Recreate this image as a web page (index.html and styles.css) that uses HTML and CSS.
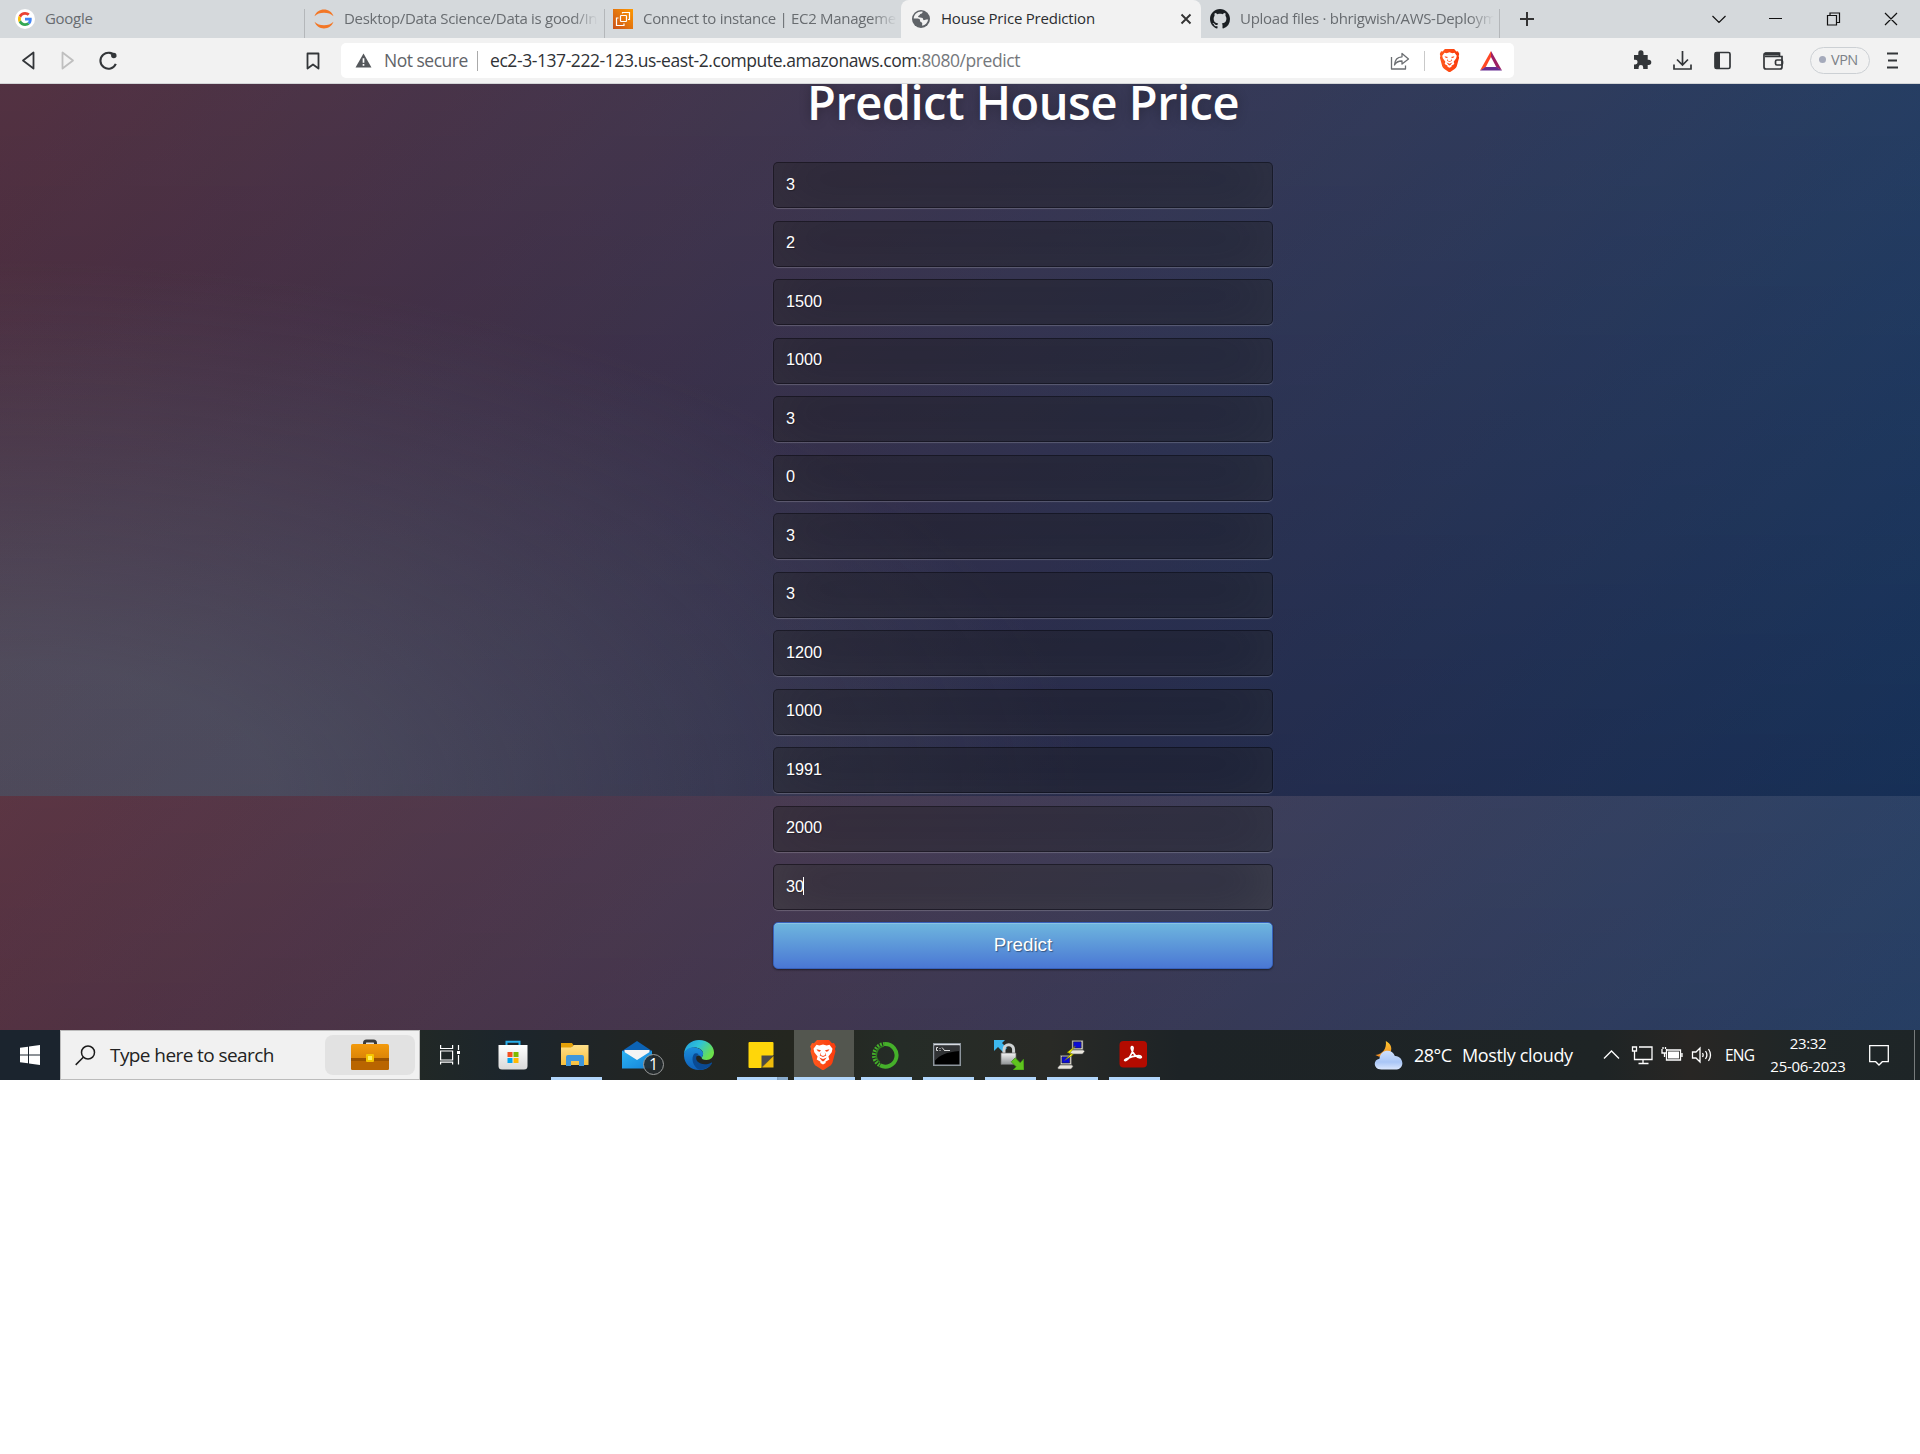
FILE: index.html
```html
<!DOCTYPE html>
<html lang="en">
<head>
<meta charset="utf-8">
<title>House Price Prediction</title>
<link rel="stylesheet" href="styles.css">
</head>
<body>
<svg width="0" height="0" class="defs" aria-hidden="true">
  <defs>
    <linearGradient id="gBrave" x1="0" x2="1"><stop offset="0" stop-color="#ff5a1f"/><stop offset="1" stop-color="#fb3b0c"/></linearGradient>
    <linearGradient id="gAws" x1="0" y1="1" x2="1" y2="0"><stop offset="0" stop-color="#c8511b"/><stop offset="1" stop-color="#ff9900"/></linearGradient>
    <linearGradient id="gCase" x1="0" y1="0" x2="0" y2="1"><stop offset="0" stop-color="#f39a0c"/><stop offset="1" stop-color="#c97404"/></linearGradient>
    <linearGradient id="gStore" x1="0" y1="0" x2="0" y2="1"><stop offset="0" stop-color="#fff"/><stop offset="1" stop-color="#d9d9d9"/></linearGradient>
    <linearGradient id="gFold" x1="0" y1="0" x2="0" y2="1"><stop offset="0" stop-color="#ffe08a"/><stop offset="1" stop-color="#f8c03c"/></linearGradient>
    <linearGradient id="gMail" x1="0" y1="0" x2="1" y2="1"><stop offset="0" stop-color="#2bb3f3"/><stop offset="1" stop-color="#1583d8"/></linearGradient>
    <linearGradient id="gEdge" x1="0" y1="0" x2="1" y2=".5"><stop offset="0" stop-color="#1f9ae0"/><stop offset=".5" stop-color="#2fc3d8"/><stop offset="1" stop-color="#6be04b"/></linearGradient>
    <linearGradient id="gEdge2" x1="0" y1="0" x2="0" y2="1"><stop offset="0" stop-color="#1b8ddb"/><stop offset="1" stop-color="#0f5fb8"/></linearGradient>
    <linearGradient id="gCloud" x1="0" y1="0" x2="0" y2="1"><stop offset="0" stop-color="#cfe0fb"/><stop offset=".6" stop-color="#a9c6f6"/><stop offset="1" stop-color="#dbe7fd"/></linearGradient>
    <linearGradient id="gMoon" x1="0" y1="0" x2="0" y2="1"><stop offset="0" stop-color="#ffc62e"/><stop offset="1" stop-color="#f08a24"/></linearGradient>
    <linearGradient id="gLock" x1="0" y1="0" x2="0" y2="1"><stop offset="0" stop-color="#f4f4f4"/><stop offset="1" stop-color="#8f9394"/></linearGradient>
    <symbol id="brave" viewBox="0 0 26 30">
      <path fill="url(#gBrave)" d="M7 0h12l3 3.200 2-.3 1.800 3.600-.9 2.600.6 2.200-3 11.200c-.5 1.600-1.500 2.700-2.800 3.600L14.400 29.600a2.400 2.400 0 0 1-2.800 0l-5.300-3.500C5 25.200 4 24.100 3.500 22.500L.5 11.300l.6-2.200L.2 6.500 2 2.900l2 .3z"/>
      <path fill="#fff" d="M6.500 4.800l2.800.6 3.700-1 3.700 1 2.800-.6 3 4-.8 3.400-3.300 4.300.9 3-3.800 2.300.2 1.300L13 24.500l-2.700-1.400.2-1.300-3.800-2.300.9-3-3.300-4.300-.8-3.400z"/>
      <path fill="#fb471a" d="M6.500 9.300l4.500 1-1.200 1.400-1.900-.4zM19.500 9.300l-4.500 1 1.200 1.400 1.900-.4zM11.200 12l-1.500 3.400 3.300 1.700 3.300-1.700-1.500-3.400.5 3-2.300 1-2.300-1zM9.200 17.500l3.800 1.600 3.800-1.600-2.600 3.300-1.200.6-1.200-.6z"/>
    </symbol>
    <symbol id="github" viewBox="0 0 16 16">
      <path d="M8 0C3.580 0 0 3.580 0 8c0 3.540 2.290 6.530 5.470 7.590.4.070.55-.17.55-.38 0-.19-.01-.82-.01-1.490-2.010.37-2.530-.49-2.690-.94-.09-.23-.48-.94-.82-1.130-.28-.15-.68-.52-.01-.53.63-.01 1.080.58 1.230.82.72 1.210 1.870.87 2.330.66.070-.52.28-.87.51-1.070-1.780-.2-3.640-.89-3.640-3.950 0-.87.31-1.590.82-2.150-.08-.2-.36-1.020.08-2.120 0 0 .67-.21 2.200.82.640-.18 1.320-.27 2-.27s1.360.09 2 .27c1.530-1.040 2.200-.82 2.200-.82.44 1.100.16 1.920.08 2.120.51.560.82 1.270.82 2.150 0 3.070-1.870 3.750-3.650 3.950.29.250.54.730.54 1.480 0 1.070-.01 1.930-.01 2.200 0 .21.150.46.550.38A8.010 8.010 0 0 0 16 8c0-4.420-3.580-8-8-8z"/>
    </symbol>
    <symbol id="pc" viewBox="0 0 16 15">
      <path fill="#d7d3c8" stroke="#555" stroke-width=".6" d="M3 .4h11v9.400H3z"/><path fill="#0b0bd8" stroke="#222" stroke-width=".6" d="M4.400 1.800h7.800v6.200H4.400z"/>
      <path fill="#e9e6dd" stroke="#555" stroke-width=".6" d="M2.500 10h12l1 1.500-2 2.500H.6l-.3-1.500z"/>
    </symbol>
  </defs>
</svg>

<div class="desktop">
  <header class="tabs">
    <div class="tab tab-google">
      <svg class="fav" viewBox="0 0 20 20"><circle cx="10" cy="10" r="10" fill="#fff"/><g transform="translate(3 3) scale(.292)"><path fill="#EA4335" d="M24 9.500c3.540 0 6.710 1.220 9.210 3.600l6.850-6.850C35.900 2.380 30.470 0 24 0 14.620 0 6.510 5.380 2.560 13.220l7.980 6.190C12.430 13.720 17.740 9.500 24 9.500z"/><path fill="#4285F4" d="M46.980 24.550c0-1.570-.15-3.090-.38-4.550H24v9.020h12.940c-.58 2.960-2.260 5.480-4.780 7.180l7.730 6c4.510-4.180 7.090-10.360 7.090-17.650z"/><path fill="#FBBC05" d="M10.530 28.590c-.48-1.450-.76-2.990-.76-4.590s.27-3.140.76-4.590l-7.980-6.190C.92 16.460 0 20.120 0 24c0 3.880.92 7.540 2.560 10.780l7.970-6.190z"/><path fill="#34A853" d="M24 48c6.480 0 11.930-2.130 15.890-5.810l-7.730-6c-2.150 1.450-4.920 2.300-8.160 2.300-6.260 0-11.570-4.220-13.470-9.910l-7.980 6.190C6.510 42.620 14.620 48 24 48z"/></g></svg>
      <span class="tab-title">Google</span>
    </div>
    <div class="tab tab-sep">
      <svg class="fav" viewBox="0 0 20 20"><path fill="#f37726" d="M.5 7.200C2.200 2.700 5.700.5 10 .5s7.800 2.200 9.500 6.700C17 4.800 14 3.700 10 3.700S3 4.800.5 7.200zM.5 12.800c1.700 4.500 5.200 6.700 9.500 6.700s7.800-2.200 9.500-6.700C17 15.200 14 16.300 10 16.300S3 15.200.5 12.800z"/></svg>
      <span class="tab-title fade">Desktop/Data Science/Data is good/In</span>
    </div>
    <div class="tab tab-sep tab-aws">
      <svg class="fav" viewBox="0 0 20 20"><path fill="url(#gAws)" d="M0 0h20v20H0z"/><g fill="none" stroke="#fff" stroke-width="1.200"><rect x="7.500" y="6.500" width="6" height="6" rx=".8"/><path d="M9.500 4.500V3.500h7v7h-1.500M5.500 9H3.500v7.500H11V14.500"/></g></svg>
      <span class="tab-title fade">Connect to instance | EC2 Managemen</span>
    </div>
    <div class="tab tab-active">
      <svg class="fav" viewBox="0 0 20 20"><circle cx="10" cy="10" r="9" fill="#5f6368"/><path fill="#f2f2f2" d="M11.500 2.500c.5 1.500-1 2.300-2.300 2.600-.5 1.700-2 1.600-2.200 2.600.5 1.200 3.500.6 4.500 1.400.8.800.3 1.700 1.300 2.100 1.300 0 2.200-.9 4.400-.7-.6 3.300-3 5.700-5.900 6.200-.5-1.200.4-2.200-.4-3.100-1-.6-2-.9-1.900-2.200.1-1.100-1-1.500-2.200-1.800-1.400-.2-2.800-.2-4.100-.2C3 5.200 6.500 2 11.500 2.500z"/></svg>
      <span class="tab-title t-act">House Price Prediction</span>
      <svg class="close" viewBox="0 0 12 12"><path d="M1.500 1.500l9 9M10.500 1.500l-9 9" stroke="#333" stroke-width="1.900"/></svg>
    </div>
    <div class="tab tab-git">
      <svg class="fav" viewBox="0 0 20 20"><use href="#github" fill="#1b1f23"/></svg>
      <span class="tab-title fade">Upload files · bhrigwish/AWS-Deploym</span>
    </div>
    <svg class="plus" viewBox="0 0 16 16"><path d="M8 1v14M1 8h14" stroke="#333" stroke-width="2"/></svg>
    <svg class="wincontrols" viewBox="0 0 190 20"><g fill="none" stroke="#111" stroke-width="1.200"><path d="M3.500 7l6.500 6.500L16.500 7M60 9.500h13M118.500 6.500h9v9.500h-9zM121 6.500V4h9.500v9.500H127.500M176 4l12 12M188 4l-12 12"/></g></svg>
  </header>

  <nav class="toolbar">
    <svg class="nav-icons" viewBox="0 0 104 24"><g fill="none" stroke-width="1.800" stroke-linejoin="round"><path stroke="#333639" d="M13.500 3.500v16L3 11.500z"/><path stroke="#bfbfbf" d="M42.500 3.500v16L53 11.500z"/><path stroke="#333639" stroke-width="2.100" d="M95.500 8a8 8 0 1 0 .3 6.800"/></g><circle cx="93.800" cy="6.500" r="2.700" fill="#333639"/></svg>
    <svg class="bookmark" viewBox="0 0 14 18"><path fill="none" stroke="#333639" stroke-width="1.800" stroke-linejoin="round" d="M1.500 1.500h11v15L7 12.500 1.500 16.500z"/></svg>
    <div class="omnibox">
      <svg class="warn" viewBox="0 0 18 16"><path fill="#55585c" d="M9 .5L17.500 15.500H.5z"/><path stroke="#fff" stroke-width="1.800" d="M9 5.500v5M9 11.700v1.800"/></svg>
      <span class="insecure">Not secure</span>
      <i class="bar"></i>
      <span class="url">ec2-3-137-222-123.us-east-2.compute.amazonaws.com<span>:8080/predict</span></span>
      <svg class="share" viewBox="0 0 20 18"><path fill="none" stroke="#6b6e72" stroke-width="1.300" stroke-linejoin="round" d="M1.500 5v12H15.500v-3.500M12 1.500l6.500 5.500-6.500 5V9c-3.500 0-6 1-7.500 4 .3-5 3-8 7.500-8.200z"/></svg>
      <i class="bar thin"></i>
      <svg class="bravebtn" viewBox="0 0 26 30"><use href="#brave"/></svg>
      <svg class="bat" viewBox="0 0 22 20"><path fill="#ff4724" d="M11 0L0 19.500l5.500-3L11 6z"/><path fill="#9e1f63" d="M11 0l11 19.500-5.500-3L11 6z"/><path fill="#662d91" d="M0 19.500h22l-5.500-3.500h-11z"/></svg>
    </div>
    <svg class="tools" viewBox="0 0 152 24"><g fill="#333639"><path d="M3 7.500h4.300V5.400a2.600 2.600 0 0 1 5.200 0v2.100h4.200v4.700h1a2.600 2.600 0 0 1 0 5.200h-1v4h-4.500v-1.500a2.300 2.300 0 0 0-4.600 0v1.500H3v-4.500h1.300a2.300 2.300 0 0 0 0-4.600H3z" transform="translate(-1 -1.500)"/></g><g fill="none" stroke="#333639" stroke-width="1.700"><path d="M50.500 2v13.500M45 10.500l5.500 5.500 5.500-5.500M42 15.500v4.500h17V15.500"/><rect x="83" y="3.500" width="15" height="16" rx="1.500"/><path d="M134 4h13.500v4M134 4c-1 0-2 .8-2 2V18a2 2 0 0 0 2 2h14a2 2 0 0 0 2-2V7.500H133"/><rect x="143.500" y="11" width="7" height="5" rx="1.500"/></g><path fill="#333639" d="M83 3.500h5v16h-5zM133 3.500h14v3h-14z"/></svg>
    <span class="vpn"><i></i>VPN</span>
    <svg class="burger" viewBox="0 0 14 18"><path d="M1 1.500h11M2 8.500h9M1 15.500h11" stroke="#333639" stroke-width="1.800"/></svg>
  </nav>

  <main class="page">
    <div class="login">
      <h1>Predict House Price</h1>
      <form>
        <input type="text" value="3"><input type="text" value="2"><input type="text" value="1500"><input type="text" value="1000"><input type="text" value="3"><input type="text" value="0"><input type="text" value="3"><input type="text" value="3"><input type="text" value="1200"><input type="text" value="1000"><input type="text" value="1991"><input type="text" value="2000">
        <div class="field focused">30<i class="caret"></i></div>
        <button type="button">Predict</button>
      </form>
    </div>
  </main>

  <footer class="taskbar">
    <div class="start"><svg width="20" height="20" viewBox="0 0 20 20"><path fill="#fff" d="M0 2.800l8-1.100v7.800H0zM9 1.500L20 0v9.500H9zM0 10.500h8v7.800L0 17.200zM9 10.500h11V20L9 18.500z"/></svg></div>
    <div class="search">
      <svg width="21" height="21" viewBox="0 0 21 21"><circle cx="13" cy="7.500" r="6.500" fill="none" stroke="#1b1b1b" stroke-width="1.500"/><path d="M8.300 12.300L.7 19.900" stroke="#1b1b1b" stroke-width="1.500"/></svg>
      <span class="search-text">Type here to search</span>
      <div class="case"><svg width="38" height="32" viewBox="0 0 38 32"><path fill="none" stroke="#3b3b3b" stroke-width="3" d="M13.500 6V4q0-2 2-2h7q2 0 2 2v2"/><rect y="5" width="38" height="26" rx="1.800" fill="url(#gCase)"/><path fill="#9a5200" d="M0 19h38v3.500H0z"/><path fill="#b96500" d="M0 22.500h38v7a1.800 1.800 0 0 1-1.800 1.500H1.800A1.800 1.800 0 0 1 0 29.500z"/><rect x="15" y="15" width="8" height="8" rx="1" fill="#f5c400"/><rect x="17" y="17" width="4" height="4" fill="#ffef5a"/></svg></div>
    </div>
    <div class="taskview"><svg width="20" height="20" viewBox="0 0 20 20"><path fill="none" stroke="#fff" stroke-width="1.200" d="M.6 0v3.500h12V0M.6 6h12v9H.6zM.6 19.500v-2.300h12v2.300M18.500 0v5M18.500 10v9.500"/><path fill="#fff" d="M17 6h3v3h-3z"/></svg></div>
    <div class="apps">
      <div class="app"><svg viewBox="0 0 30 30"><path fill="none" stroke="#28aeea" stroke-width="2" d="M8.500 6V1.800h13V6"/><path fill="url(#gStore)" d="M.5 5h29v21q0 3.500-3.500 3.500H4Q.5 29.500.5 26z"/><path fill="#f25022" d="M9.500 12h5v5h-5z"/><path fill="#7fba00" d="M15.500 12h5v5h-5z"/><path fill="#00a4ef" d="M9.500 18h5v5h-5z"/><path fill="#ffb900" d="M15.500 18h5v5h-5z"/></svg></div>
      <div class="app run"><svg viewBox="0 0 30 30"><path fill="#e3a008" d="M1 3h11l2 3h-2v4H1z"/><path fill="url(#gFold)" d="M1 7.500h10L14 5h14.500v20H1z"/><path fill="#3f97db" d="M6 26V17q0-2 2-2h14q2 0 2 2v9h-5v-5h-8v5z"/></svg></div>
      <div class="app"><svg viewBox="0 0 30 30"><path fill="#0c63b5" d="M0 11L15 1l15 10v6H0z"/><path fill="#f4f4f4" d="M2.500 10h25v6L15 22 2.500 15z"/><path fill="url(#gMail)" d="M0 10.500l15 9.500 15-9.500v18H0z"/></svg><span class="badge">1</span></div>
      <div class="app"><svg viewBox="0 0 30 30"><path fill="url(#gEdge)" d="M0 14C.5 5.500 7 0 15 0c9 0 15 6 15 12.500 0 4.500-3.500 7.500-7.500 7.500-3.500 0-5-1.200-4.800-2.300.1-.9 1.400-1.400 1.400-4.200C19 10 15 7.500 10.500 7.500 6 7.500 2 10 0 14z"/><path fill="url(#gEdge2)" d="M0 14c1.500-5 6-7 10.500-6.600 4 .3 8.600 2.600 8.600 6.100 0 2.500-1.300 3.300-1.400 4.200-4-5.500-10 .8-6.500 6 3.500 5 10.800 4 15.800 1.200C24.500 28 20.500 30 15 30 6 30-.5 23 0 14z"/><path fill="#0a4a93" d="M10 14c-3 4-1.500 12 5 15.800C20.500 30 25 27.500 28 23.500c.4-.8-.3-1.300-1-.8-5 2.700-11 1.500-13.500-1.200-2.200-2.400-1.500-6.500 1.300-7.300C13 13 11 13 10 14z"/></svg></div>
      <div class="app run multi"><svg viewBox="0 0 30 30"><path fill="#ffd60a" d="M3.500 2h23q1 0 1 1v12L15 28H3.500q-1 0-1-1V3q0-1 1-1z"/><path fill="#4a4a48" d="M15.500 15.500h12L15.500 27.500z"/><path fill="#eebb0c" d="M27.500 16v11.500H16z"/></svg></div>
      <div class="app run current"><svg viewBox="0 0 30 30"><use href="#brave" x="2" width="26" height="30"/></svg></div>
      <div class="app run"><svg viewBox="0 0 30 30"><path fill="none" stroke="#45b02a" stroke-width="4" d="M15 4a11.300 11.300 0 1 1-5 21.300"/><path fill="none" stroke="#45b02a" stroke-width="4" stroke-dasharray="1.800 1.200" d="M9.500 25A11.300 11.300 0 0 1 15 4"/><path fill="none" stroke="#2e7d1f" stroke-width="1.500" d="M10 22.500A9.300 9.300 0 0 1 14 6"/></svg></div>
      <div class="app run"><svg viewBox="0 0 30 30"><path fill="#8d959d" d="M1 3h28v23H1z"/><path fill="#d7dbe0" d="M2 4h26v1.500H2z"/><path fill="#000" d="M2.500 5.500h25v19h-25z"/><path fill="#46494c" d="M2.500 5.500h25V11C14 12 8 15 2.500 21z" opacity=".7"/><path stroke="#ddd" fill="none" d="M6 7.500H4.500v3H6M8 8v1M8 10v1M10 7.500l3 3.500M13 10.500h5"/></svg></div>
      <div class="app run"><svg viewBox="0 0 30 30"><path fill="#3db7ee" d="M0 0h11L8 3l5 5-4 4-5-5-4 4z"/><path fill="none" stroke="#cfd3d4" stroke-width="3" d="M10 14V9.500a4.800 4.800 0 0 1 9.600 0V14"/><path fill="url(#gLock)" stroke="#666" stroke-width=".7" d="M7 13h15v11.500H7z"/><path fill="#5fc41e" stroke="#3d8c12" stroke-width=".7" d="M30 30H19l3.200-3.200-5-5 4-4 5 5L29.700 19z"/></svg></div>
      <div class="app run"><svg viewBox="0 0 30 30"><use href="#pc" x="13" y="0" width="16" height="15"/><use href="#pc" x="1" y="15" width="17" height="15"/><path fill="#ff0" stroke="#6d6d00" stroke-width=".5" d="M19.500 6L11 12.500l4.500 1L8.500 20.500l9-6-4-1z"/></svg></div>
      <div class="app run"><svg viewBox="0 0 30 30"><rect x="1.500" y="1" width="27.500" height="26.500" rx="4" fill="#b30b00"/><path fill="none" stroke="#fff" stroke-width="1.700" d="M7.300 20.600c2.800-.2 7.700-7.600 7.800-12.300.1-2.600-2.300-2.200-1.800.4.800 4.300 5.500 9 8.800 9.100 2 0 1.600-2.200-1.400-2.100-4.600.2-9.700 1.800-12.600 3.300-1.500.8-2 1.600-.8 1.600z"/></svg></div>
    </div>
    <div class="tray">
      <svg class="weather" viewBox="0 0 31 32"><path fill="url(#gMoon)" d="M12 0c6 3 8 9 4 14-3 4-10 5-15.500 1.500C9 14.500 13 8 12 0z"/><path fill="url(#gCloud)" d="M7 31.500c-9 0-9.500-11-2-12C6 9 19 8 22 16.500c9-.5 12 13.500 2 15z"/></svg>
      <span class="temp">28°C</span><span class="sky">Mostly cloudy</span>
      <svg class="trayicons" viewBox="0 0 110 22"><g fill="none" stroke="#fff" stroke-width="1.300"><path d="M1 14.500l7.500-7.500 7.500 7.500M36 3h13v12.500H31.500V9.500M40 15.500V19M35.500 19.500h10M29.500 3h4v4h-4zM31.500 7v2.500M63.500 6h14v10h-14zM79 9v4M59 5v4h4.500V5M60 3v2M62.500 3v2M61.500 9v4M89.500 8h3.500l4-4v14l-4-4h-3.500zM99.500 9q1.300 2 0 4M102.500 7q2.800 4 0 8M105.500 5q4 6 0 12"/></g><path fill="#fff" d="M65 7.500h11v7H65z"/></svg>
      <span class="lang">ENG</span>
      <div class="clock"><span>23:32</span><span class="date">25-06-2023</span></div>
      <svg class="notif" viewBox="0 0 20 21"><path fill="none" stroke="#fff" stroke-width="1.300" d="M.7.700h18.600v16h-6L10 20l-3.300-3.300h-6z"/></svg>
      <i class="peek"></i>
    </div>
  </footer>
</div>
</body>
</html>
```
FILE: styles.css
```css
* { box-sizing: border-box; }
body { margin: 0; background: #fff; font-family: "Open Sans", "Noto Sans", sans-serif; }
svg { display: block; flex: none; }
.defs { position: absolute; }
.desktop { width: 1920px; height: 1080px; display: flex; flex-direction: column; overflow: hidden; }

/* Tab strip */
.tabs { height: 38px; background: #d5d9dc; display: flex; align-items: center; }
.tab { height: 38px; width: 300px; display: flex; align-items: center; padding-left: 10px; flex: none; position: relative; }
.tab-google { width: 304px; padding-left: 15px; }
.tab-sep::before { content: ""; position: absolute; left: 0; top: 9px; height: 29px; width: 1px; background: #b4b7ba; }
.tab-aws { width: 297px; padding-left: 9px; }
.tab-active { background: #f2f2f2; border-radius: 8px 8px 0 0; padding-right: 9px; }
.tab-git { padding-left: 9px; }
.tab-git::after { content: ""; position: absolute; right: 1px; top: 9px; height: 29px; width: 1px; background: #b4b7ba; }
.fav { width: 20px; height: 20px; }
.tab-title { margin-left: 10px; padding-bottom: 2px; font-size: 15px; line-height: 20px; letter-spacing: -.3px; color: #686c70; white-space: nowrap; }
.fade { width: 254px; overflow: hidden; -webkit-mask-image: linear-gradient(90deg, #000 90%, transparent 100%); mask-image: linear-gradient(90deg, #000 90%, transparent 100%); }
.t-act { color: #2b2d30; flex: 1; letter-spacing: -.2px; }
.close { width: 12px; height: 12px; }
.plus { width: 16px; height: 16px; margin-left: 18px; }
.wincontrols { width: 190px; height: 20px; margin-left: 174px; overflow: visible; }

/* Address bar */
.toolbar { height: 46px; background: #f2f2f2; border-bottom: 1px solid #d3d5d7; display: flex; align-items: center; }
.nav-icons { width: 104px; height: 24px; margin-left: 20px; }
.bookmark { width: 14px; height: 18px; margin-left: 182px; }
.omnibox { width: 1173px; height: 35px; margin-left: 21px; background: #fff; border-radius: 5px; display: flex; align-items: center; padding-left: 14px; font-size: 17.500px; }
.warn { width: 17px; height: 15px; }
.insecure { width: 83px; margin-left: 12px; padding-bottom: 2px; color: #5f6368; white-space: nowrap; letter-spacing: -.5px; }
.bar { width: 1px; height: 20px; margin-left: 10px; background: #aaa; }
.url { width: 900px; margin-left: 12px; padding-bottom: 2px; color: #303236; white-space: nowrap; letter-spacing: -.43px; }
.url span { color: #75787c; }
.share { width: 20px; height: 18px; }
.thin { margin-left: 14px; background: #c9c9c9; }
.bravebtn { width: 21px; height: 23px; margin-left: 14px; }
.bat { width: 22px; height: 20px; margin-left: 20px; }
.tools { width: 152px; height: 24px; margin-left: 118px; }
.vpn { width: 60px; height: 27px; margin-left: 26px; padding: 0 0 2px 8px; border: 1px solid #ccd0d4; border-radius: 14px; display: flex; align-items: center; gap: 5px; font-size: 14.500px; color: #7c8187; letter-spacing: -.5px; }
.vpn i { width: 7px; height: 7px; border-radius: 50%; background: #a5aabb; }
.burger { width: 14px; height: 18px; margin-left: 16px; }

/* Web page */
.page {
  height: 946px; overflow: hidden;
  background-color: #092756;
  background-image:
    radial-gradient(ellipse farthest-corner at 0% 100%, rgba(104,128,138,.4) 10%, rgba(138,114,76,0) 40%),
    linear-gradient(to bottom, rgba(57,173,219,.25) 0%, rgba(42,60,87,.4) 100%),
    linear-gradient(135deg, #670d10 0%, #092756 100%);
  background-size: 100% 946px;
  background-position: 0 -234px;
}
.login { width: 500px; margin-left: 773px; }
h1 { margin: -16px 0 0; height: 94px; line-height: 68px; font-size: 47px; font-weight: 600; color: #fff; text-align: center; white-space: nowrap; letter-spacing: -.5px; text-shadow: 0 0 12px rgba(0,0,0,.3); }
input, .field {
  display: block; width: 100%; height: 46px; margin: 0 0 12.500px; padding: 0 12px 2px; outline: none;
  background: rgba(0,0,0,.3); border: 1px solid rgba(0,0,0,.3); border-radius: 5px;
  font: 16.250px "Liberation Sans", Arial, sans-serif; color: #fff; text-shadow: 1px 1px 1px rgba(0,0,0,.3);
  box-shadow: inset 0 -6px 56px rgba(100,100,100,.2), 0 1px 1px rgba(255,255,255,.2);
}
.focused { display: flex; align-items: center; margin-bottom: 12px; box-shadow: inset 0 -6px 56px rgba(100,100,100,.4), 0 1px 1px rgba(255,255,255,.2); }
.caret { width: 1px; height: 18px; background: #fff; margin-left: -1px; }
button {
  display: block; width: 100%; height: 47px; padding: 0 0 2px; border: 1px solid #3762bc; border-radius: 5px;
  background: linear-gradient(#6eb6de, #4a77d4); color: #fff; font: 18.750px "Liberation Sans", Arial, sans-serif;
  text-shadow: 1px 1px 1px rgba(0,0,0,.4); box-shadow: inset 0 1px 0 rgba(255,255,255,.2), 0 1px 2px rgba(0,0,0,.5);
}

/* Taskbar */
.taskbar { height: 50px; display: flex; background: linear-gradient(90deg, #1b242e 0, #1b242e 60px, #212826 420px, #1c252c 510px, #222523 650px, #24261f 790px, #252c27 900px, #292a26 1050px, #1d2326 1180px, #1e2425 1600px, #282624 1690px, #1f2627 1800px, #1e2527 1920px); }
.start { width: 60px; display: flex; align-items: center; justify-content: center; }
.search { width: 360px; background: #f1f1f1; border: 1px solid #bcbcbc; display: flex; align-items: center; padding-left: 14px; }
.search-text { width: 215px; margin-left: 14px; font-size: 19px; letter-spacing: -.58px; color: #222; white-space: nowrap; }
.case { width: 90px; height: 40px; border-radius: 8px; background: #e2e2e2; display: flex; justify-content: center; padding-top: 4px; }
.taskview { width: 62px; padding: 15px 0 0 20px; }
.apps { display: flex; }
.app { width: 62px; height: 50px; padding: 10px 0 0 16px; position: relative; }
.app svg { width: 30px; height: 30px; }
.run::after { content: ""; position: absolute; left: 7px; bottom: 0; width: 51px; height: 3px; background: #b1d6fb; }
.multi::after { background: linear-gradient(90deg, #b1d6fb 40px, #7a9bbb 40px, #88aacb 42px); }
.current { background: linear-gradient(#53564f, #53564f) 2px 0 / 61px 50px no-repeat; }
.current::after { left: 2px; width: 61px; }
.badge { position: absolute; left: 37px; top: 24px; width: 21px; height: 21px; border-radius: 50%; border: 1px solid #9a9c9c; background: rgba(35,42,44,.9); color: #fff; font-size: 16px; line-height: 19px; text-align: center; }
.tray { margin-left: auto; display: flex; align-items: center; color: #fff; white-space: nowrap; font-size: 18px; }
.weather { width: 30px; height: 29px; }
.temp { width: 48px; margin-left: 10px; letter-spacing: -.5px; }
.sky { width: 141px; letter-spacing: -.35px; }
.trayicons { width: 110px; height: 22px; }
.lang { width: 45px; margin-left: 12px; font-size: 15.500px; letter-spacing: -.8px; }
.clock { width: 76px; display: flex; flex-direction: column; align-items: center; font-size: 15px; line-height: 23px; letter-spacing: -.3px; }
.notif { width: 20px; height: 21px; margin-left: 23px; }
.peek { width: 1px; height: 50px; margin: 0 5px 0 25px; background: #777b7c; }
```
